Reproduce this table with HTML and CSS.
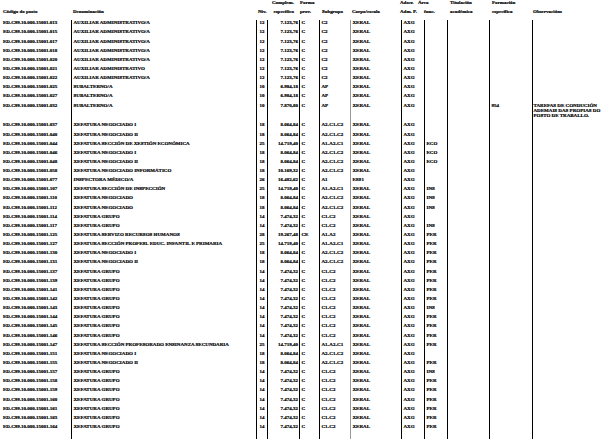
FILE: index.html
```html
<!DOCTYPE html>
<html lang="gl">
<head>
<meta charset="utf-8">
<title>Relación de postos</title>
<link rel="stylesheet" href="styles.css">
</head>
<body>
<div class="sheet">
  <div class="cols hd">
    <div class="h-cod"><span>Código do posto</span></div>
    <div class="h-den"><span>Denominación</span></div>
    <div class="h-niv"><span>Niv.</span></div>
    <div class="h-com"><span>Complem.</span><span>específico</span></div>
    <div class="h-for"><span>Forma</span><span>prov.</span></div>
    <div class="h-sub"><span>Subgrupo</span></div>
    <div class="h-cor"><span>Corpo/escala</span></div>
    <div class="h-ads"><span>Adscr.</span><span>Adm. P.</span></div>
    <div class="h-are"><span class="l1">Área</span><span>func.</span></div>
    <div class="h-tit"><span>Titulación</span><span>académica</span></div>
    <div class="h-fes"><span>Formación</span><span>específica</span></div>
    <div class="h-obs"><span>Observacións</span></div>
  </div>

  <div class="cols r"><span>ED.C99.10.000.15001.013</span><span>AUXILIAR ADMINISTRATIVO/A</span><span class="n">12</span><span class="m">7.123,76</span><span>C</span><span>C2</span><span class="k">XERAL</span><span>AXG</span><span></span><span></span><span></span><span class="o"></span></div>
  <div class="cols r"><span>ED.C99.10.000.15001.015</span><span>AUXILIAR ADMINISTRATIVO/A</span><span class="n">12</span><span class="m">7.123,76</span><span>C</span><span>C2</span><span class="k">XERAL</span><span>AXG</span><span></span><span></span><span></span><span class="o"></span></div>
  <div class="cols r"><span>ED.C99.10.000.15001.017</span><span>AUXILIAR ADMINISTRATIVO/A</span><span class="n">12</span><span class="m">7.123,76</span><span>C</span><span>C2</span><span class="k">XERAL</span><span>AXG</span><span></span><span></span><span></span><span class="o"></span></div>
  <div class="cols r"><span>ED.C99.10.000.15001.018</span><span>AUXILIAR ADMINISTRATIVO/A</span><span class="n">12</span><span class="m">7.123,76</span><span>C</span><span>C2</span><span class="k">XERAL</span><span>AXG</span><span></span><span></span><span></span><span class="o"></span></div>
  <div class="cols r"><span>ED.C99.10.000.15001.020</span><span>AUXILIAR ADMINISTRATIVO/A</span><span class="n">12</span><span class="m">7.123,76</span><span>C</span><span>C2</span><span class="k">XERAL</span><span>AXG</span><span></span><span></span><span></span><span class="o"></span></div>
  <div class="cols r"><span>ED.C99.10.000.15001.021</span><span>AUXILIAR ADMINISTRATIVO</span><span class="n">12</span><span class="m">7.123,76</span><span>C</span><span>C2</span><span class="k">XERAL</span><span>AXG</span><span></span><span></span><span></span><span class="o"></span></div>
  <div class="cols r"><span>ED.C99.10.000.15001.022</span><span>AUXILIAR ADMINISTRATIVO/A</span><span class="n">12</span><span class="m">7.123,76</span><span>C</span><span>C2</span><span class="k">XERAL</span><span>AXG</span><span></span><span></span><span></span><span class="o"></span></div>
  <div class="cols r"><span>ED.C99.10.000.15001.025</span><span>SUBALTERNO/A</span><span class="n">10</span><span class="m">6.984,18</span><span>C</span><span>AP</span><span class="k">XERAL</span><span>AXG</span><span></span><span></span><span></span><span class="o"></span></div>
  <div class="cols r"><span>ED.C99.10.000.15001.027</span><span>SUBALTERNO/A</span><span class="n">10</span><span class="m">6.984,18</span><span>C</span><span>AP</span><span class="k">XERAL</span><span>AXG</span><span></span><span></span><span></span><span class="o"></span></div>
  <div class="cols r tall"><span>ED.C99.10.000.15001.032</span><span>SUBALTERNO/A</span><span class="n">10</span><span class="m">7.870,80</span><span>C</span><span>AP</span><span class="k">XERAL</span><span>AXG</span><span></span><span></span><span>954</span><span class="o">TAREFAS DE CONDUCIÓN<br>ADEMAIS DAS PROPIAS DO<br>POSTO DE TRABALLO.</span></div>
  <div class="cols r"><span>ED.C99.10.000.15001.037</span><span>XEFATURA NEGOCIADO I</span><span class="n">18</span><span class="m">8.064,84</span><span>C</span><span>A2-C1-C2</span><span class="k">XERAL</span><span>AXG</span><span></span><span></span><span></span><span class="o"></span></div>
  <div class="cols r"><span>ED.C99.10.000.15001.040</span><span>XEFATURA NEGOCIADO II</span><span class="n">18</span><span class="m">8.064,84</span><span>C</span><span>A2-C1-C2</span><span class="k">XERAL</span><span>AXG</span><span></span><span></span><span></span><span class="o"></span></div>
  <div class="cols r"><span>ED.C99.10.000.15001.044</span><span>XEFATURA SECCIÓN DE XESTIÓN ECONÓMICA</span><span class="n">25</span><span class="m">14.719,40</span><span>C</span><span>A1-A2-C1</span><span class="k">XERAL</span><span>AXG</span><span>ECO</span><span></span><span></span><span class="o"></span></div>
  <div class="cols r"><span>ED.C99.10.000.15001.046</span><span>XEFATURA NEGOCIADO I</span><span class="n">18</span><span class="m">8.064,84</span><span>C</span><span>A2-C1-C2</span><span class="k">XERAL</span><span>AXG</span><span>ECO</span><span></span><span></span><span class="o"></span></div>
  <div class="cols r"><span>ED.C99.10.000.15001.048</span><span>XEFATURA NEGOCIADO II</span><span class="n">18</span><span class="m">8.064,84</span><span>C</span><span>A2-C1-C2</span><span class="k">XERAL</span><span>AXG</span><span>ECO</span><span></span><span></span><span class="o"></span></div>
  <div class="cols r"><span>ED.C99.10.000.15001.058</span><span>XEFATURA NEGOCIADO INFORMÁTICO</span><span class="n">18</span><span class="m">10.169,32</span><span>C</span><span>A2-C1-C2</span><span class="k">XERAL</span><span>AXG</span><span></span><span></span><span></span><span class="o"></span></div>
  <div class="cols r"><span>ED.C99.10.000.15001.077</span><span>INSPECTORA MÉDICO/A</span><span class="n">26</span><span class="m">16.482,62</span><span>C</span><span>A1</span><span class="k">ESS1</span><span>AXG</span><span></span><span></span><span></span><span class="o"></span></div>
  <div class="cols r"><span>ED.C99.10.000.15001.107</span><span>XEFATURA SECCIÓN DE INSPECCIÓN</span><span class="n">25</span><span class="m">14.719,40</span><span>C</span><span>A1-A2-C1</span><span class="k">XERAL</span><span>AXG</span><span>INS</span><span></span><span></span><span class="o"></span></div>
  <div class="cols r"><span>ED.C99.10.000.15001.110</span><span>XEFATURA NEGOCIADO</span><span class="n">18</span><span class="m">8.064,84</span><span>C</span><span>A2-C1-C2</span><span class="k">XERAL</span><span>AXG</span><span>INS</span><span></span><span></span><span class="o"></span></div>
  <div class="cols r"><span>ED.C99.10.000.15001.112</span><span>XEFATURA NEGOCIADO</span><span class="n">18</span><span class="m">8.064,84</span><span>C</span><span>A2-C1-C2</span><span class="k">XERAL</span><span>AXG</span><span>INS</span><span></span><span></span><span class="o"></span></div>
  <div class="cols r"><span>ED.C99.10.000.15001.114</span><span>XEFATURA GRUPO</span><span class="n">14</span><span class="m">7.474,32</span><span>C</span><span>C1-C2</span><span class="k">XERAL</span><span>AXG</span><span></span><span></span><span></span><span class="o"></span></div>
  <div class="cols r"><span>ED.C99.10.000.15001.117</span><span>XEFATURA GRUPO</span><span class="n">14</span><span class="m">7.474,32</span><span>C</span><span>C1-C2</span><span class="k">XERAL</span><span>AXG</span><span>INS</span><span></span><span></span><span class="o"></span></div>
  <div class="cols r"><span>ED.C99.10.000.15001.125</span><span>XEFATURA SERVIZO RECURSOS HUMANOS</span><span class="n">28</span><span class="m">19.267,48</span><span>CE</span><span>A1-A2</span><span class="k">XERAL</span><span>AXG</span><span>PER</span><span></span><span></span><span class="o"></span></div>
  <div class="cols r"><span>ED.C99.10.000.15001.127</span><span>XEFATURA SECCIÓN PROFESI. EDUC. INFANTIL E PRIMARIA</span><span class="n">25</span><span class="m">14.719,40</span><span>C</span><span>A1-A2-C1</span><span class="k">XERAL</span><span>AXG</span><span>PER</span><span></span><span></span><span class="o"></span></div>
  <div class="cols r"><span>ED.C99.10.000.15001.130</span><span>XEFATURA NEGOCIADO I</span><span class="n">18</span><span class="m">8.064,84</span><span>C</span><span>A2-C1-C2</span><span class="k">XERAL</span><span>AXG</span><span>PER</span><span></span><span></span><span class="o"></span></div>
  <div class="cols r"><span>ED.C99.10.000.15001.131</span><span>XEFATURA NEGOCIADO II</span><span class="n">18</span><span class="m">8.064,84</span><span>C</span><span>A2-C1-C2</span><span class="k">XERAL</span><span>AXG</span><span>PER</span><span></span><span></span><span class="o"></span></div>
  <div class="cols r"><span>ED.C99.10.000.15001.137</span><span>XEFATURA GRUPO</span><span class="n">14</span><span class="m">7.474,32</span><span>C</span><span>C1-C2</span><span class="k">XERAL</span><span>AXG</span><span>PER</span><span></span><span></span><span class="o"></span></div>
  <div class="cols r"><span>ED.C99.10.000.15001.139</span><span>XEFATURA GRUPO</span><span class="n">14</span><span class="m">7.474,32</span><span>C</span><span>C1-C2</span><span class="k">XERAL</span><span>AXG</span><span>PER</span><span></span><span></span><span class="o"></span></div>
  <div class="cols r"><span>ED.C99.10.000.15001.141</span><span>XEFATURA GRUPO</span><span class="n">14</span><span class="m">7.474,32</span><span>C</span><span>C1-C2</span><span class="k">XERAL</span><span>AXG</span><span>PER</span><span></span><span></span><span class="o"></span></div>
  <div class="cols r"><span>ED.C99.10.000.15001.142</span><span>XEFATURA GRUPO</span><span class="n">14</span><span class="m">7.474,32</span><span>C</span><span>C1-C2</span><span class="k">XERAL</span><span>AXG</span><span>PER</span><span></span><span></span><span class="o"></span></div>
  <div class="cols r"><span>ED.C99.10.000.15001.143</span><span>XEFATURA GRUPO</span><span class="n">14</span><span class="m">7.474,32</span><span>C</span><span>C1-C2</span><span class="k">XERAL</span><span>AXG</span><span>INS</span><span></span><span></span><span class="o"></span></div>
  <div class="cols r"><span>ED.C99.10.000.15001.144</span><span>XEFATURA GRUPO</span><span class="n">14</span><span class="m">7.474,32</span><span>C</span><span>C1-C2</span><span class="k">XERAL</span><span>AXG</span><span>PER</span><span></span><span></span><span class="o"></span></div>
  <div class="cols r"><span>ED.C99.10.000.15001.145</span><span>XEFATURA GRUPO</span><span class="n">14</span><span class="m">7.474,32</span><span>C</span><span>C1-C2</span><span class="k">XERAL</span><span>AXG</span><span>PER</span><span></span><span></span><span class="o"></span></div>
  <div class="cols r"><span>ED.C99.10.000.15001.146</span><span>XEFATURA GRUPO</span><span class="n">14</span><span class="m">7.474,32</span><span>C</span><span>C1-C2</span><span class="k">XERAL</span><span>AXG</span><span>PER</span><span></span><span></span><span class="o"></span></div>
  <div class="cols r"><span>ED.C99.10.000.15001.147</span><span>XEFATURA SECCIÓN PROFESORADO ENSINANZA SECUNDARIA</span><span class="n">25</span><span class="m">14.719,40</span><span>C</span><span>A1-A2-C1</span><span class="k">XERAL</span><span>AXG</span><span>PER</span><span></span><span></span><span class="o"></span></div>
  <div class="cols r"><span>ED.C99.10.000.15001.151</span><span>XEFATURA NEGOCIADO I</span><span class="n">18</span><span class="m">8.064,84</span><span>C</span><span>A2-C1-C2</span><span class="k">XERAL</span><span>AXG</span><span></span><span></span><span></span><span class="o"></span></div>
  <div class="cols r"><span>ED.C99.10.000.15001.155</span><span>XEFATURA NEGOCIADO II</span><span class="n">18</span><span class="m">8.064,84</span><span>C</span><span>A2-C1-C2</span><span class="k">XERAL</span><span>AXG</span><span>PER</span><span></span><span></span><span class="o"></span></div>
  <div class="cols r"><span>ED.C99.10.000.15001.157</span><span>XEFATURA GRUPO</span><span class="n">14</span><span class="m">7.474,32</span><span>C</span><span>C1-C2</span><span class="k">XERAL</span><span>AXG</span><span>INS</span><span></span><span></span><span class="o"></span></div>
  <div class="cols r"><span>ED.C99.10.000.15001.158</span><span>XEFATURA GRUPO</span><span class="n">14</span><span class="m">7.474,32</span><span>C</span><span>C1-C2</span><span class="k">XERAL</span><span>AXG</span><span>PER</span><span></span><span></span><span class="o"></span></div>
  <div class="cols r"><span>ED.C99.10.000.15001.159</span><span>XEFATURA GRUPO</span><span class="n">14</span><span class="m">7.474,32</span><span>C</span><span>C1-C2</span><span class="k">XERAL</span><span>AXG</span><span>PER</span><span></span><span></span><span class="o"></span></div>
  <div class="cols r"><span>ED.C99.10.000.15001.160</span><span>XEFATURA GRUPO</span><span class="n">14</span><span class="m">7.474,32</span><span>C</span><span>C1-C2</span><span class="k">XERAL</span><span>AXG</span><span>PER</span><span></span><span></span><span class="o"></span></div>
  <div class="cols r"><span>ED.C99.10.000.15001.161</span><span>XEFATURA GRUPO</span><span class="n">14</span><span class="m">7.474,32</span><span>C</span><span>C1-C2</span><span class="k">XERAL</span><span>AXG</span><span>PER</span><span></span><span></span><span class="o"></span></div>
  <div class="cols r"><span>ED.C99.10.000.15001.163</span><span>XEFATURA GRUPO</span><span class="n">14</span><span class="m">7.474,32</span><span>C</span><span>C1-C2</span><span class="k">XERAL</span><span>AXG</span><span>PER</span><span></span><span></span><span class="o"></span></div>
  <div class="cols r"><span>ED.C99.10.000.15001.164</span><span>XEFATURA GRUPO</span><span class="n">14</span><span class="m">7.474,32</span><span>C</span><span>C1-C2</span><span class="k">XERAL</span><span>AXG</span><span>PER</span><span></span><span></span><span class="o"></span></div>
  <div class="cols r fill"><span></span><span></span><span></span><span></span><span></span><span></span><span class="k"></span><span></span><span></span><span></span><span></span><span class="o"></span></div>
</div>
</body>
</html>
```

FILE: styles.css
```css
html, body {
  margin: 0;
  padding: 0;
  background: #ffffff;
}
body {
  font-family: "Liberation Serif", "Times New Roman", serif;
  font-weight: bold;
  font-size: 5px;
  color: #000000;
  -webkit-text-stroke: 0.2px #000000;
  overflow: hidden;
}
.sheet {
  width: 616px;
  height: 439px;
  overflow: hidden;
}
.cols {
  display: grid;
  grid-template-columns: 71px 185px 11px 32px 20px 31px 51px 23px 23px 42px 43px 84px;
}

/* header */
.hd {
  height: 20px;
}
.hd > div {
  display: flex;
  flex-direction: column;
  justify-content: flex-end;
  gap: 3.6px;
  padding-bottom: 5.6px;
  line-height: 5.4px;
  white-space: nowrap;
}
.h-cod { padding-left: 3px; }
.h-den { padding-left: 2px; }
.h-niv { padding-left: 2px; }
.h-com { align-items: flex-end; padding-right: 5px; }
.h-for { padding-left: 1px; }
.h-sub { padding-left: 3px; }
.h-cor { padding-left: 2px; }
.h-ads { margin-left: -1px; }
.h-are .l1 { margin-left: -6px; }
.h-tit { padding-left: 3px; }
.h-fes { padding-left: 3px; }
.h-obs { padding-left: 1px; }

/* body rows */
.r {
  height: 9.15px;
}
.r.tall {
  height: 19.75px;
}
.r.fill {
  height: 12px;
}
.r > span {
  border-left: 1px solid #000000;
  padding: 0.35px 0 0 1.5px;
  line-height: 5.3px;
  white-space: nowrap;
  overflow: visible;
}
.r > span:first-child {
  border-left: none;
  padding-left: 3px;
}
.r > span.n {
  text-align: center;
  padding-left: 0;
}
.r > span.m {
  text-align: right;
  padding-left: 0;
  padding-right: 1px;
}
.r > span.k {
  border-left: 1.5px solid #9a9a9a;
}
.r > span.o {
  border-left: 1.2px solid #000000;
  padding-left: 0.5px;
}
```
